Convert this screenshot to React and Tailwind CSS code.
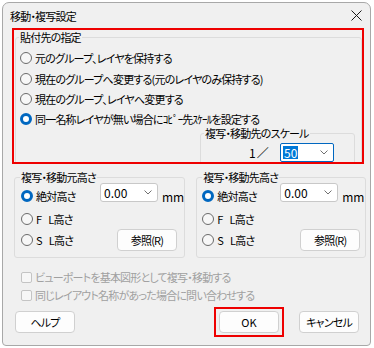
import React from "react";

const FONT = "font-['Noto_Sans_CJK_JP','Noto_Sans',sans-serif] [font-feature-settings:'palt'] tracking-[-0.8px]";

function Radio({ checked, label }) {
  return (
    <div className="flex items-center gap-[3px] h-[14px]">
      {checked ? (
        <span className="w-[12px] h-[12px] rounded-full border-[3.5px] border-[#0067c0] bg-white shrink-0" />
      ) : (
        <span className="w-[12px] h-[12px] rounded-full border border-[#6b6b6b] bg-[#f7f7f7] shrink-0" />
      )}
      <span className="text-[11px] leading-[14px] text-black whitespace-nowrap">{label}</span>
    </div>
  );
}

function Chevron() {
  return (
    <svg width="8" height="5" viewBox="0 0 8 5" className="shrink-0">
      <path d="M0.5 0.5 L4 4 L7.5 0.5" fill="none" stroke="#707070" strokeWidth="1" />
    </svg>
  );
}

function Select({ value, w }) {
  return (
    <div className={`flex items-center justify-between h-[19px] ${w} bg-white border border-[#c8c8c8] rounded-[3px] pl-[3px] pr-[5px]`}>
      <span className="text-[12px] leading-[14px] text-black tracking-normal">{value}</span>
      <Chevron />
    </div>
  );
}

function Button({ children, className = "" }) {
  return (
    <div className={`flex items-center justify-center w-[60px] h-[22px] bg-[#fdfdfd] border border-[#d0d0d0] rounded-[4px] text-[11px] leading-[14px] text-black ${className}`}>
      {children}
    </div>
  );
}

function FL({ letter }) {
  return (
    <span className="whitespace-nowrap">
      <span>{letter}</span>
      <span className="ml-[7px]">L</span>
      <span>高さ</span>
    </span>
  );
}

function HeightGroup({ title, colW, btnMl, radioPl }) {
  return (
    <fieldset className="w-[170px] h-[88px] border border-[#dcdcdc] rounded-[3px]">
      <legend className="ml-[5px] px-[1px] text-[11px] leading-[14px] text-black">{title}</legend>
      <div className="flex h-[23px] mt-[-1px]">
        <div className={`${colW} ${radioPl} pt-[6px]`}>
          <Radio checked label="絶対高さ" />
        </div>
        <Select value="0.00" w="w-[58px]" />
        <span className="ml-[4px] mt-[7px] text-[12px] leading-[14px] text-black tracking-normal">mm</span>
      </div>
      <div className={`h-[24px] ${radioPl} pt-[6px]`}>
        <Radio label={<FL letter="F" />} />
      </div>
      <div className="flex items-center h-[22px] mt-[-1px]">
        <div className={`${colW} ${radioPl}`}>
          <Radio label={<FL letter="S" />} />
        </div>
        <Button className={btnMl}>参照(R)</Button>
      </div>
    </fieldset>
  );
}

function Checkbox({ label }) {
  return (
    <div className="flex items-center h-[18px] pl-[9px] gap-[3px]">
      <span className="w-[11px] h-[11px] border border-[#c4c4c4] rounded-[2px] bg-[#f7f7f7] shrink-0" />
      <span className="text-[11px] leading-[14px] text-[#a0a0a0] whitespace-nowrap">{label}</span>
    </div>
  );
}

export default function App() {
  return (
    <div className={`w-[374px] h-[348px] bg-white pt-[2px] pl-[2px] overflow-hidden ${FONT}`}>
      <div className="w-[369px] h-[344px] border border-[#a8a8a8] rounded-t-[7px] rounded-b-[4px] bg-[#f0f0f0]">
        {/* title bar */}
        <div className="h-[25px] flex items-center justify-between pl-[7px] pr-[8px]">
          <span className="text-[11px] leading-[14px] text-black">移動・複写設定</span>
          <svg width="11" height="11" viewBox="0 0 11 11">
            <path d="M0.5 0.5 L10.5 10.5 M10.5 0.5 L0.5 10.5" stroke="#1a1a1a" strokeWidth="1" />
          </svg>
        </div>

        <div className="pl-[9px]">
          {/* red highlighted group */}
          <div className="w-[352px] h-[136px] border-2 border-[#ee0000] overflow-hidden">
            <fieldset className="ml-[1px] w-[347px] h-[140px] border border-[#dcdcdc] rounded-[3px]">
              <legend className="ml-[3px] px-[1px] text-[11px] leading-[14px] text-black">貼付先の指定</legend>
              <div className="mt-[4px] pl-[4px]">
                <div className="h-[20px] flex items-center">
                  <Radio label="元のグループ、レイヤを保持する" />
                </div>
                <div className="h-[21px] flex items-center">
                  <Radio label="現在のグループへ変更する(元のレイヤのみ保持する)" />
                </div>
                <div className="h-[20px] flex items-center">
                  <Radio label="現在のグループ、レイヤへ変更する" />
                </div>
                <div className="h-[19px] flex items-center">
                  <Radio checked label="同一名称レイヤが無い場合にｺﾋﾟｰ先ｽｹｰﾙを設定する" />
                </div>
              </div>
              <fieldset className="mt-[-1px] ml-[184px] w-[155px] h-[44px] border border-[#dcdcdc] rounded-[3px]">
                <legend className="ml-[3px] px-[1px] text-[11px] leading-[12px] text-black">複写・移動先のスケール</legend>
                <div className="flex items-center mt-[4px]">
                  <span className="ml-[48px] w-[31px] text-[12px] leading-[14px] text-black">1 ／</span>
                  <div className="flex items-center justify-between w-[54px] h-[19px] bg-white border border-[#0067c0] rounded-[2px] pl-[2px] pr-[5px]">
                    <span className="bg-[#0078d7] text-white text-[12px] leading-[13px] px-[1px] tracking-normal">50</span>
                    <Chevron />
                  </div>
                </div>
              </fieldset>
            </fieldset>
          </div>

          {/* height groups */}
          <div className="flex mt-[6px] ml-[2px] gap-[11px]">
            <HeightGroup title="複写・移動元高さ" colW="w-[85px]" btnMl="ml-[17px]" radioPl="pl-[6px]" />
            <HeightGroup title="複写・移動先高さ" colW="w-[83px]" btnMl="ml-[20px]" radioPl="pl-[5px]" />
          </div>

          {/* checkboxes */}
          <div className="mt-[10px]">
            <Checkbox label="ビューポートを基本図形として複写・移動する" />
            <Checkbox label="同じレイアウト名称があった場合に問い合わせする" />
          </div>

          {/* buttons */}
          <div className="flex items-center mt-[3px]">
            <Button className="ml-[3px]">ヘルプ</Button>
            <div className="ml-[139px] w-[70px] h-[30px] border-2 border-[#ee0000] flex items-center justify-center">
              <Button className="border-[#8ab6e6] tracking-normal">OK</Button>
            </div>
            <Button className="ml-[15px]">キャンセル</Button>
          </div>
        </div>
      </div>
    </div>
  );
}
